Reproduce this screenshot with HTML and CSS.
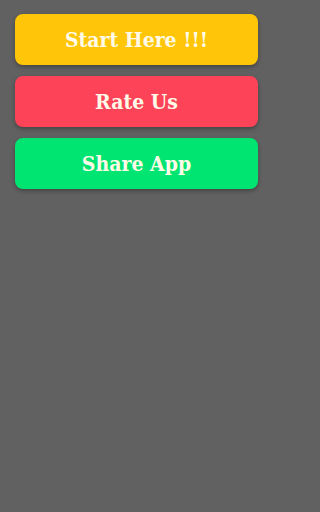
FILE: index.html
```html
<!DOCTYPE html>
<html>
<head>
<meta charset="utf-8">
<link rel="stylesheet" href="styles.css">
</head>
<body>
<div class="menu">
  <button class="btn btn-start">Start Here !!!</button>
  <button class="btn btn-rate">Rate Us</button>
  <button class="btn btn-share">Share App</button>
</div>
</body>
</html>
```
FILE: styles.css
```css
html, body {
  margin: 0;
  padding: 0;
  background: #616161;
  height: 100%;
}
.menu {
  display: flex;
  flex-direction: column;
  gap: 11px;
  width: 243px;
  padding: 14px 15px 0 15px;
}
.btn {
  height: 51px;
  border: none;
  border-radius: 8px;
  font-family: "DejaVu Serif Condensed", "DejaVu Serif", "Liberation Serif", serif;
  font-stretch: condensed;
  font-weight: bold;
  font-size: 21px;
  color: #fffbe8;
  box-shadow: 0 2px 4px rgba(0,0,0,0.3);
  padding: 0;
}
.btn-start { background: #ffc508; }
.btn-rate { background: #fc4358; }
.btn-share { background: #00e571; }
```
